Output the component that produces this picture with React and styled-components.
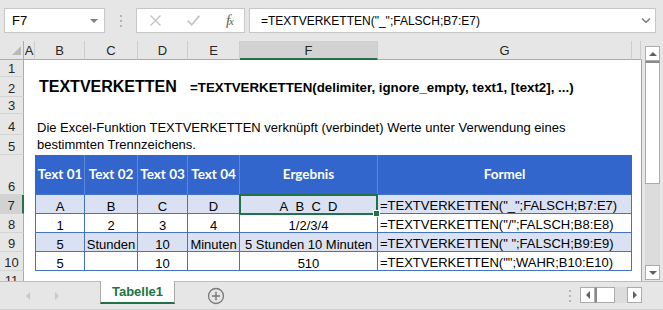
import React from 'react';
import styled, { createGlobalStyle } from 'styled-components';

const Global = createGlobalStyle`
  html, body { margin: 0; padding: 0; }
  body {
    width: 663px; height: 310px; overflow: hidden;
    background: #e6e6e6;
    font-family: "Liberation Sans", Arial, sans-serif;
  }
`;

const Window = styled.div`
  width: 663px; height: 310px;
  display: flex; flex-direction: column;
  background: #e6e6e6;
  overflow: hidden;
`;

/* ---------- formula bar ---------- */
const FormulaBar = styled.div`
  height: 41px; flex: none; box-sizing: border-box;
  display: flex; align-items: flex-start;
  padding: 8px 7px 0 4px;
`;

const BoxBase = styled.div`
  height: 25px; box-sizing: border-box;
  background: #fff; border: 1px solid #c6c6c6;
  display: flex; align-items: center;
`;

const NameBox = styled(BoxBase)`
  width: 101px;
  justify-content: space-between;
  padding: 0 6px 0 7px;
  font-size: 13px; color: #000;
`;

const DropTriangle = styled.span`
  width: 0; height: 0;
  border-left: 4px solid transparent; border-right: 4px solid transparent;
  border-top: 4px solid #808080;
`;

const Grip = styled.div`
  width: ${p => p.$w}px; height: ${p => p.$h}px; flex: none;
  display: flex; flex-direction: column; align-items: center; justify-content: center; gap: 3px;
  span { width: 2px; height: 2px; background: #b4b4b4; }
`;

const FnBox = styled(BoxBase)`
  width: 109px;
  justify-content: space-between;
  padding: 0 11px 0 13px;
`;

const FxLabel = styled.span`
  font-family: "Liberation Serif", "DejaVu Serif", serif;
  font-style: italic; font-size: 15px; color: #606060; letter-spacing: -1px;
  small { font-size: 11px; }
`;

const FormulaInput = styled(BoxBase)`
  flex: 1; margin-left: 4px;
  justify-content: space-between;
  padding: 0 4px 0 11px;
  font-size: 12px; color: #000;
`;

/* ---------- sheet ---------- */
const SheetArea = styled.div`
  display: flex; height: 240px; flex: none;
`;

const SheetGrid = styled.div`
  display: grid;
  grid-template-columns: 24px 11px 50px 53px 50px 52px 138px 254px 9px 1px;
  grid-template-rows: 19px 17px 20px 17px 21px 20px 40px 19px 19px 19px 19px 10px;
  width: 642px; flex: none;
  background: #fff;
`;

const Corner = styled.div`
  grid-row: 1; grid-column: 1;
  background: #e6e6e6;
  border-right: 1px solid #ababab; border-bottom: 1px solid #ababab;
  box-sizing: border-box;
  display: flex; align-items: flex-end; justify-content: flex-end;
  padding: 0 2px 4px 0;
`;

const CornerTri = styled.span`
  width: 0; height: 0;
  border-left: 9px solid transparent;
  border-bottom: 9px solid #b9b9b9;
`;

const ColHead = styled.div`
  grid-row: 1; grid-column: ${p => p.$col};
  box-sizing: border-box;
  background: ${p => (p.$sel ? '#d2d2d2' : '#e6e6e6')};
  border-right: ${p => (p.$noSep ? 'none' : '1px solid #cdcdcd')};
  border-bottom: ${p => (p.$sel ? '2px solid #217346' : '1px solid #ababab')};
  display: flex; align-items: center; justify-content: center;
  font-size: 13px; color: #262626; overflow: hidden;
  padding-top: 1px;
`;

const RowHead = styled.div`
  grid-row: ${p => p.$row}; grid-column: 1;
  box-sizing: border-box;
  background: ${p => (p.$sel ? '#d2d2d2' : '#e6e6e6')};
  border-right: ${p => (p.$sel ? '2px solid #217346' : '1px solid #ababab')};
  border-bottom: ${p => (p.$cut ? 'none' : '1px solid #d4d4d4')};
  display: flex; align-items: ${p => (p.$cut ? 'flex-start' : 'flex-end')}; justify-content: center;
  font-size: 13px; line-height: 13px; color: #262626;
  padding: ${p => (p.$cut ? '3px 0 0' : '0 0 1px')};
  overflow: hidden;
`;

const EdgeLine = styled.div`
  grid-row: 2 / -1; grid-column: 10;
  background: #a0a0a0;
`;

const TextCell = styled.div`
  grid-row: ${p => p.$row}; grid-column: ${p => p.$col};
  display: flex; align-items: flex-end;
  white-space: nowrap;
  padding: 0 0 ${p => p.$pb}px ${p => p.$pl}px;
  font-size: ${p => p.$size}px;
  font-weight: ${p => (p.$bold ? 700 : 400)};
  line-height: ${p => p.$lh}px;
  color: #000;
  min-width: 0;
`;

const TableHead = styled.div`
  grid-row: 7; grid-column: ${p => p.$col};
  box-sizing: border-box;
  background: #3366cc;
  border-right: 1px solid ${p => (p.$last ? '#3366cc' : '#5f87d8')};
  border-bottom: 1px solid #4472c4;
  ${p => p.$first && 'border-left: 1px solid #3366cc;'}
  display: flex; align-items: center; justify-content: center;
  font-family: Lato, "Open Sans", sans-serif;
  font-weight: 700; font-size: 13.5px; color: #fff;
  white-space: nowrap;
  padding-bottom: 2px;
`;

const TableCell = styled.div`
  grid-row: ${p => p.$row}; grid-column: ${p => p.$col};
  box-sizing: border-box;
  background: ${p => (p.$band ? '#d9e1f2' : '#fff')};
  border-right: 1px solid #4472c4;
  border-bottom: 1px solid #4472c4;
  ${p => p.$first && 'border-left: 1px solid #4472c4;'}
  display: flex; align-items: flex-end;
  justify-content: ${p => (p.$left ? 'flex-start' : 'center')};
  padding: ${p => (p.$left ? '0 0 1px 2px' : '0 1px 0 1px')};
  font-size: 13px; line-height: 13px; color: #000;
  white-space: nowrap; overflow: hidden;
`;

const Selection = styled.div`
  grid-row: 8; grid-column: 7;
  position: relative; z-index: 2;
  margin: -1px 0 -1px -1px;
  border: 2px solid #217346;
  pointer-events: none;
  &::after {
    content: '';
    position: absolute; right: -4px; bottom: -4px;
    width: 5px; height: 5px;
    background: #217346; border: 1px solid #fff;
  }
`;

/* ---------- vertical scrollbar ---------- */
const VScroll = styled.div`
  width: 15px; height: 234px; flex: none;
  margin: 5px 0 0 3px;
  display: flex; flex-direction: column;
  background: #dcdcdc;
`;

const ScrollBtn = styled.div`
  width: ${p => p.$w}px; height: ${p => p.$h}px; flex: none; box-sizing: border-box;
  background: #fff; border: 1px solid #ababab;
  display: flex; align-items: center; justify-content: center;
`;

const VThumb = styled.div`
  height: 123px; flex: none; box-sizing: border-box;
  background: #fff;
  border: 1px solid #ababab; border-top: 2px solid #8a8a8a;
`;

const Track = styled.div`
  flex: 1; background: #dcdcdc;
`;

const Arrow = styled.span`
  width: 0; height: 0;
  ${p => p.$dir === 'up' && 'border-left:4px solid transparent;border-right:4px solid transparent;border-bottom:4px solid #606060;'}
  ${p => p.$dir === 'down' && 'border-left:4px solid transparent;border-right:4px solid transparent;border-top:4px solid #606060;'}
  ${p => p.$dir === 'left' && `border-top:4px solid transparent;border-bottom:4px solid transparent;border-right:4px solid ${p.$c || '#606060'};`}
  ${p => p.$dir === 'right' && `border-top:4px solid transparent;border-bottom:4px solid transparent;border-left:4px solid ${p.$c || '#606060'};`}
`;

/* ---------- tab bar ---------- */
const TabBar = styled.div`
  flex: 1; box-sizing: border-box;
  display: flex; align-items: flex-start;
  border-top: 1px solid #bdbdbd;
  border-bottom: 1px solid #d0d0d0;
`;

const NavArrows = styled.div`
  width: 100px; height: 27px; flex: none;
  display: flex; align-items: center; justify-content: flex-start;
  gap: 25px; padding-left: 26px; box-sizing: border-box;
`;

const SheetTab = styled.div`
  width: 75px; height: 23px; flex: none; box-sizing: border-box;
  background: #fff;
  border-left: 1px solid #ababab; border-right: 1px solid #ababab;
  border-bottom: 2px solid #217346;
  margin-top: -1px;
  display: flex; align-items: center; justify-content: center;
  font-size: 13px; font-weight: 700; color: #217346;
`;

const AddSheet = styled.div`
  width: 18px; height: 27px; margin-left: 32px; flex: none;
  display: flex; align-items: center; justify-content: center;
`;

const Spacer = styled.div`flex: 1;`;

const HScroll = styled.div`
  width: 62px; height: 16px; flex: none;
  margin: 5px 21px 0 9px;
  display: flex;
  background: #dcdcdc;
`;

const HThumb = styled.div`
  width: 20px; flex: none; box-sizing: border-box;
  background: #fff; border-top: 1px solid #ababab; border-bottom: 1px solid #ababab;
  border-left: 2px solid #8a8a8a; border-right: 1px solid #ababab;
`;

/* ---------- data ---------- */
const colLetters = ['A', 'B', 'C', 'D', 'E', 'F', 'G'];
const tableHead = ['Text 01', 'Text 02', 'Text 03', 'Text 04', 'Ergebnis', 'Formel'];
const tableRows = [
  ['A', 'B', 'C', 'D', 'A_B_C_D', '=TEXTVERKETTEN("_";FALSCH;B7:E7)'],
  ['1', '2', '3', '4', '1/2/3/4', '=TEXTVERKETTEN("/";FALSCH;B8:E8)'],
  ['5', 'Stunden', '10', 'Minuten', '5 Stunden 10 Minuten', '=TEXTVERKETTEN(" ";FALSCH;B9:E9)'],
  ['5', '', '10', '', '510', '=TEXTVERKETTEN("";WAHR;B10:E10)'],
];

export default function App() {
  return (
    <>
      <Global />
      <Window>
        <FormulaBar>
          <NameBox>
            F7
            <DropTriangle />
          </NameBox>
          <Grip $w={31} $h={25}>
            <span />
            <span />
            <span />
          </Grip>
          <FnBox>
            <svg width="11" height="11" viewBox="0 0 11 11">
              <path d="M0.5 0.5L10.5 10.5M10.5 0.5L0.5 10.5" stroke="#c4c4c4" strokeWidth="1.4" />
            </svg>
            <svg width="13" height="11" viewBox="0 0 13 11">
              <path d="M0.7 5.6L4.6 9.8L12.4 0.8" stroke="#c4c4c4" strokeWidth="1.7" fill="none" />
            </svg>
            <FxLabel>
              f<small>x</small>
            </FxLabel>
          </FnBox>
          <FormulaInput>
            <span>=TEXTVERKETTEN("_";FALSCH;B7:E7)</span>
            <svg width="10" height="7" viewBox="0 0 10 7">
              <path d="M1 1.5L5 5.2L9 1.5" stroke="#7a7a7a" strokeWidth="1.5" fill="none" />
            </svg>
          </FormulaInput>
        </FormulaBar>

        <SheetArea>
          <SheetGrid>
            <Corner>
              <CornerTri />
            </Corner>
            {colLetters.map((l, i) => (
              <ColHead key={l} $col={i + 2} $sel={l === 'F'}>
                {l}
              </ColHead>
            ))}
            <ColHead $col={9} />
            <ColHead $col={10} $noSep />
            {Array.from({ length: 11 }, (_, i) => (
              <RowHead key={i} $row={i + 2} $sel={i + 1 === 7} $cut={i + 1 === 11}>
                {i + 1}
              </RowHead>
            ))}
            <EdgeLine />

            <TextCell $row={3} $col="3 / 6" $size={16} $bold $lh={16} $pl={4} $pb={2}>
              TEXTVERKETTEN
            </TextCell>
            <TextCell $row={3} $col="6 / 10" $size={13.3} $bold $lh={14} $pl={2} $pb={2}>
              =TEXTVERKETTEN(delimiter, ignore_empty, text1, [text2], ...)
            </TextCell>
            <TextCell $row="5 / 7" $col="3 / 10" $size={13} $lh={17} $pl={2} $pb={2}>
              Die Excel-Funktion TEXTVERKETTEN verknüpft (verbindet) Werte unter Verwendung eines
              <br />
              bestimmten Trennzeichens.
            </TextCell>

            {tableHead.map((h, i) => (
              <TableHead key={h} $col={i + 3} $first={i === 0} $last={i === tableHead.length - 1}>
                {h}
              </TableHead>
            ))}
            {tableRows.map((row, r) =>
              row.map((v, c) => (
                <TableCell
                  key={`${r}-${c}`}
                  $row={r + 8}
                  $col={c + 3}
                  $band={r % 2 === 0}
                  $first={c === 0}
                  $left={c === 5}
                >
                  {v}
                </TableCell>
              ))
            )}
            <Selection />
          </SheetGrid>

          <VScroll>
            <ScrollBtn $w={15} $h={15}>
              <Arrow $dir="up" />
            </ScrollBtn>
            <VThumb />
            <Track />
            <ScrollBtn $w={15} $h={15}>
              <Arrow $dir="down" />
            </ScrollBtn>
          </VScroll>
        </SheetArea>

        <TabBar>
          <NavArrows>
            <Arrow $dir="left" $c="#c8c8c8" />
            <Arrow $dir="right" $c="#c8c8c8" />
          </NavArrows>
          <SheetTab>Tabelle1</SheetTab>
          <AddSheet>
            <svg width="18" height="18" viewBox="0 0 18 18">
              <circle cx="9" cy="9" r="7.5" stroke="#7a7a7a" strokeWidth="1.3" fill="none" />
              <path d="M9 4.8V13.2M4.8 9H13.2" stroke="#7a7a7a" strokeWidth="1.5" />
            </svg>
          </AddSheet>
          <Spacer />
          <Grip $w={2} $h={27}>
            <span />
            <span />
            <span />
          </Grip>
          <HScroll>
            <ScrollBtn $w={15} $h={16}>
              <Arrow $dir="left" />
            </ScrollBtn>
            <HThumb />
            <Track />
            <ScrollBtn $w={15} $h={16}>
              <Arrow $dir="right" />
            </ScrollBtn>
          </HScroll>
        </TabBar>
      </Window>
    </>
  );
}
